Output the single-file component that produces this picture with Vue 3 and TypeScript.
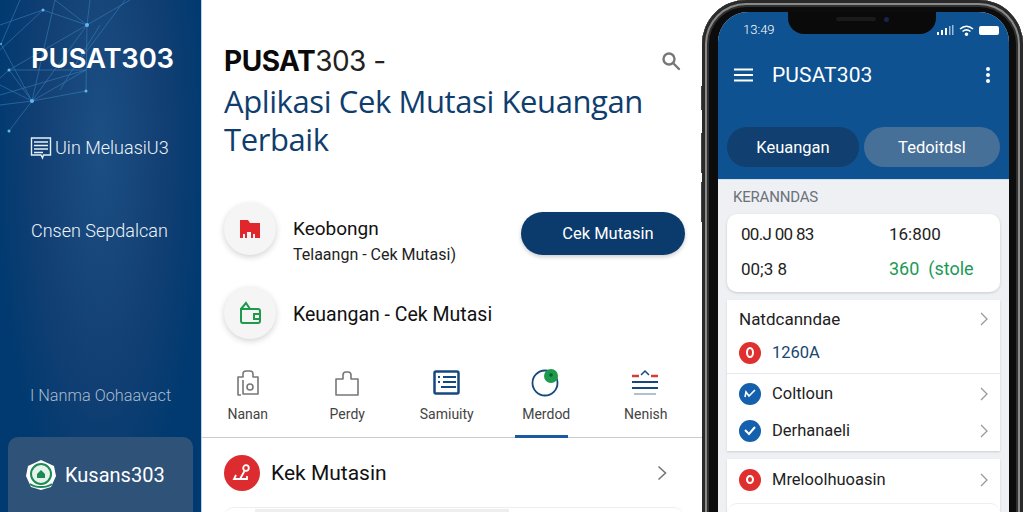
<template>
  <div class="page">
    <aside class="side">
      <svg class="net" viewBox="0 0 140 135" width="140" height="135" aria-hidden="true">
        <g stroke="#3f86c4" stroke-width="0.7" fill="none" opacity="0.75">
          <path v-for="(l, i) in netLines" :key="i" :d="l" />
        </g>
        <circle v-for="(n, i) in netNodes" :key="i" :cx="n[0]" :cy="n[1]" :r="n[2]" fill="#62b8ee" />
      </svg>
      <h1 class="brand">PUSAT303</h1>
      <div class="side-item first">
        <svg width="22" height="24" viewBox="0 0 22 24" fill="none" stroke="#e8f0f7" stroke-width="1.4">
          <path d="M1.500 2h19v17h-7l-1 3-1.500-3H1.500z" />
          <path d="M4 6h14M4 9.500h14M4 13h14M4 16.500h9" />
        </svg>
        <span>Uin MeluasiU3</span>
      </div>
      <div class="side-item second"><span>Cnsen Sepdalcan</span></div>
      <div class="side-spacer" />
      <div class="side-muted">I Nanma Oohaavact</div>
      <div class="account">
        <svg width="32" height="32" viewBox="0 0 32 32">
          <path d="M16 1l13 6 2 10-5 11-10 3-10-3-5-11 2-10z" fill="#fff" />
          <circle cx="16" cy="15" r="10" fill="#e6f3ec" stroke="#1d8a55" stroke-width="2" />
          <path d="M12 15l4-4 4 4v4h-8z" fill="#1d8a55" />
          <path d="M5 25c6 4 16 4 22 0" fill="none" stroke="#1d8a55" stroke-width="2" />
        </svg>
        <span>Kusans303</span>
      </div>
    </aside>

    <main class="main">
      <header class="head">
        <div class="title-line">
          <span><b>PUSAT</b>303 -</span>
          <svg width="20" height="20" viewBox="0 0 20 20" fill="none" stroke="#777" stroke-width="2.400">
            <circle cx="8" cy="8" r="5.500" />
            <path d="M12 12l6 6" stroke-linecap="round" />
          </svg>
        </div>
        <h2>Aplikasi Cek Mutasi Keuangan<br />Terbaik</h2>
      </header>

      <section class="rows">
        <div class="row">
          <div class="bubble">
            <svg width="22" height="20" viewBox="0 0 22 20">
              <path d="M1 1h8l2 3h10v15h-5v-4h-2v4h-2v-6H8v6H6v-4H4v4H1z" fill="#e0282c" />
            </svg>
          </div>
          <div class="row-text">
            <div class="row-title">Keobongn</div>
            <div class="row-sub">Telaangn - Cek Mutasi)</div>
          </div>
          <button type="button" class="cta">Cek Mutasin</button>
        </div>
        <div class="row">
          <div class="bubble">
            <svg width="24" height="24" viewBox="0 0 24 24" fill="none" stroke="#1d9a4c" stroke-width="2">
              <path d="M3 8h17a2 2 0 0 1 2 2v10a2 2 0 0 1-2 2H5a2 2 0 0 1-2-2z" />
              <path d="M3 8l5-6 4 6M16 13h6v5h-6z" />
            </svg>
          </div>
          <div class="row-title wide">Keuangan - Cek Mutasi</div>
        </div>
      </section>

      <nav class="tabs">
        <div v-for="t in tabs" :key="t.label" class="tab" :class="{ active: t.active }">
          <svg width="30" height="30" viewBox="0 0 30 30" fill="none" v-html="t.icon" />
          <span>{{ t.label }}</span>
        </div>
      </nav>

      <div class="link-row">
        <div class="red-dot">
          <svg width="22" height="22" viewBox="0 0 22 22" fill="none" stroke="#fff" stroke-width="1.800">
            <circle cx="15" cy="6" r="2.800" />
            <path d="M13.500 9L9 17H3l2-4M9 17h7v-3" />
          </svg>
        </div>
        <span class="link-label">Kek Mutasin</span>
        <svg class="chev" width="10" height="16" viewBox="0 0 10 16" fill="none" stroke="#777" stroke-width="1.600">
          <path d="M1.500 1.500L8.500 8l-7 6.500" />
        </svg>
      </div>
      <div class="peek" />
    </main>

    <div class="phone-wrap">
      <div class="phone">
        <i class="btn-a" /><i class="btn-b" /><i class="btn-c" />
        <div class="screen">
          <div class="notch"><i class="speaker" /><i class="camera" /></div>
          <div class="blue">
            <div class="status">
              <span>13:49</span>
              <div class="status-icons">
                <svg width="17" height="10" viewBox="0 0 17 10" fill="#fff">
                  <rect x="0" y="7" width="2" height="3" /><rect x="4" y="5" width="2" height="5" />
                  <rect x="8" y="3" width="2" height="7" /><rect x="12" y="1" width="1.500" height="9" opacity=".6" />
                  <rect x="15" y="0" width="1.500" height="10" opacity=".6" />
                </svg>
                <svg width="15" height="11" viewBox="0 0 15 11" fill="none" stroke="#fff" stroke-width="1.600">
                  <path d="M1 4c4-3.500 9-3.500 13 0M3.500 6.500c2.500-2 5.500-2 8 0" />
                  <circle cx="7.500" cy="9.200" r="1" fill="#fff" />
                </svg>
                <div class="battery" />
              </div>
            </div>
            <div class="appbar">
              <svg width="20" height="14" viewBox="0 0 20 14" stroke="#fff" stroke-width="1.800">
                <path d="M0 1.500h19M0 7h19M0 12.500h19" />
              </svg>
              <span class="app-title">PUSAT303</span>
              <svg class="dots" width="6" height="18" viewBox="0 0 6 18" fill="#fff">
                <circle cx="3" cy="3" r="2" /><circle cx="3" cy="9" r="2" /><circle cx="3" cy="15" r="2" />
              </svg>
            </div>
            <div class="pills">
              <div class="pill dark">Keuangan</div>
              <div class="pill light">Tedoitdsl</div>
            </div>
          </div>
          <div class="body">
            <div class="label">KERANNDAS</div>
            <div class="stat-card">
              <span class="tight">00.J 00 83</span><span>16:800</span>
              <span>00;3 8</span><span class="green">360&nbsp; (stole</span>
            </div>
            <div class="list">
              <div class="li">
                <span class="li-name plain">Natdcanndae</span>
                <svg class="li-chev" width="8" height="14" viewBox="0 0 8 14" fill="none" stroke="#999" stroke-width="1.300"><path d="M1 1l6 6-6 6" /></svg>
              </div>
              <div class="li amount">
                <i class="dot red"><i class="ring" /></i>
                <span class="li-name navy">1260A</span>
              </div>
              <div class="li sep">
                <i class="dot blue-dot"><svg width="12" height="10" viewBox="0 0 12 10" fill="none" stroke="#fff" stroke-width="1.600"><path d="M1 8l1-5 3 4 6-6" /></svg></i>
                <span class="li-name">Coltloun</span>
                <svg class="li-chev" width="8" height="14" viewBox="0 0 8 14" fill="none" stroke="#999" stroke-width="1.300"><path d="M1 1l6 6-6 6" /></svg>
              </div>
              <div class="li">
                <i class="dot blue-dot"><svg width="12" height="10" viewBox="0 0 12 10" fill="none" stroke="#fff" stroke-width="2"><path d="M1 4l4 4 6-7" /></svg></i>
                <span class="li-name">Derhanaeli</span>
                <svg class="li-chev" width="8" height="14" viewBox="0 0 8 14" fill="none" stroke="#999" stroke-width="1.300"><path d="M1 1l6 6-6 6" /></svg>
              </div>
            </div>
            <div class="list second-list">
              <div class="li">
                <i class="dot red"><i class="ring small" /></i>
                <span class="li-name">Mreloolhuoasin</span>
                <svg class="li-chev" width="8" height="14" viewBox="0 0 8 14" fill="none" stroke="#999" stroke-width="1.300"><path d="M1 1l6 6-6 6" /></svg>
              </div>
              <div class="li-peek" />
            </div>
          </div>
        </div>
      </div>
    </div>
  </div>
</template>

<script setup lang="ts">
const netNodes: [number, number, number][] = [
  [43, 10, 1.500], [87, 25, 2], [9, 70, 1.500], [32, 101, 2], [86, 91, 1.500], [9, 131, 1.500], [1, 44, 1],
];

const netLines: string[] = [
  'M0 25L43 10L87 25', 'M43 10L0 50', 'M55 0L87 25', 'M87 25L32 101', 'M87 25L86 91', 'M90 0L87 25',
  'M87 25L130 0', 'M100 25L60 90', 'M125 0L80 60', 'M0 78L9 70L86 70', 'M9 70L32 101', 'M32 101L86 91',
  'M0 105L32 101', 'M32 101L9 131', 'M0 85L32 101', 'M9 70L87 25', 'M1 44L32 101', 'M55 0L32 101', 'M20 0L1 44',
  'M0 95L86 70', 'M32 101L86 70',
];

interface Tab {
  label: string;
  icon: string;
  active?: boolean;
}

const tabs: Tab[] = [
  {
    label: 'Nanan',
    icon: '<g stroke="#777" stroke-width="1.600" stroke-linejoin="round"><path d="M8 27H5V9h5V6a3 3 0 0 1 3-3h4a3 3 0 0 1 3 3v3h5v17H10V12"/><circle cx="17" cy="19" r="3"/></g>',
  },
  {
    label: 'Perdy',
    icon: '<path d="M4 27V11h7V7a3 3 0 0 1 3-3h2a3 3 0 0 1 3 3v4h7v16z" stroke="#777" stroke-width="1.600" stroke-linejoin="round"/>',
  },
  {
    label: 'Samiuity',
    icon: '<rect x="2.500" y="3.500" width="24" height="22" rx="1.500" stroke="#14487f" stroke-width="2.500"/><path d="M6 9h2M11 9h13M6 14h2M11 14h13M9 19h15" stroke="#14487f" stroke-width="2"/>',
  },
  {
    label: 'Merdod',
    active: true,
    icon: '<circle cx="14" cy="15" r="12.500" stroke="#14487f" stroke-width="1.800"/><circle cx="20" cy="8" r="7" fill="#1d9a4c"/><circle cx="20" cy="7" r="1.800" fill="#0d5b2e"/>',
  },
  {
    label: 'Nenish',
    icon: '<path d="M1 8h7M20 8h7" stroke="#d83a34" stroke-width="2.500"/><path d="M10 7l4-4 4 4" stroke="#14487f" stroke-width="1.500"/><path d="M1 14h26M1 20h26" stroke="#14487f" stroke-width="2"/><path d="M3 26h22" stroke="#9ab" stroke-width="1.500"/>',
  },
];
</script>

<style>
html,
body {
  margin: 0;
  background: #fff;
}
</style>

<style scoped>
.page {
  display: flex;
  width: 1024px;
  height: 512px;
  overflow: hidden;
  background: #fff;
  font-family: Roboto, "Liberation Sans", sans-serif;
  color: #111;
}

/* left rail */
.side {
  position: relative;
  box-sizing: border-box;
  flex: 0 0 202px;
  display: flex;
  flex-direction: column;
  padding: 42px 8px 0;
  overflow: hidden;
  color: #eef4f9;
  background: radial-gradient(ellipse at 50% 28%, #1c4f84 0, #123f73 45%, rgba(0, 58, 112, 0) 75%), #003a70;
  border-right: 1px solid #b5d2ee;
}

.net {
  position: absolute;
  top: 0;
  left: 0;
}

.brand {
  position: relative;
  margin: 0 0 0 23px;
  font-family: Inter, sans-serif;
  font-size: 27.500px;
  line-height: 32px;
  font-weight: 600;
  letter-spacing: -0.2px;
  color: #fff;
}

.side-item {
  position: relative;
  display: flex;
  align-items: center;
  gap: 3px;
  margin-left: 22px;
  font-size: 18px;
  font-weight: 300;
  line-height: 24px;
}

.side-item.first {
  margin-top: 62px;
}

.side-item.second {
  margin-top: 59px;
  margin-left: 23px;
}

.side-spacer {
  flex: 1;
}

.side-muted {
  margin-left: 22px;
  margin-bottom: 29px;
  font-size: 16.300px;
  line-height: 24px;
  font-weight: 300;
  color: #a9bccf;
  white-space: nowrap;
}

.account {
  display: flex;
  align-items: center;
  gap: 8px;
  height: 75px;
  padding: 0 0 0 17px;
  border-radius: 10px 10px 0 0;
  background: #2f5279;
  font-size: 20px;
  color: #fff;
}

/* middle panel */
.main {
  box-sizing: border-box;
  flex: 0 0 500px;
  display: flex;
  flex-direction: column;
  padding-left: 22px;
  overflow: hidden;
}

.main > * {
  flex-shrink: 0;
}

.head {
  padding: 42px 21px 0 0;
}

.title-line {
  display: flex;
  align-items: center;
  justify-content: space-between;
  font-family: Inter, sans-serif;
  font-size: 28px;
  line-height: 38px;
  letter-spacing: -0.5px;
  color: #222;
}

.title-line b {
  font-weight: 700;
  color: #0a0a0a;
}

.head h2 {
  margin: 2px 0 0;
  font-family: "Open Sans", sans-serif;
  font-size: 31px;
  line-height: 38px;
  font-weight: 400;
  letter-spacing: -0.4px;
  color: #0f3d6e;
}

.rows {
  display: flex;
  flex-direction: column;
  gap: 30px;
  margin-top: 44px;
  padding-right: 17px;
}

.row {
  display: flex;
  align-items: center;
  gap: 17px;
  height: 54px;
}

.bubble {
  flex: 0 0 52px;
  height: 52px;
  display: flex;
  align-items: center;
  justify-content: center;
  border-radius: 50%;
  background: #f5f5f5;
  box-shadow: 0 2px 6px rgba(0, 0, 0, 0.18);
}

.row-text {
  flex: 1;
  padding-top: 26px;
}

.row-title {
  font-size: 19px;
  line-height: 26px;
  color: #111;
}

.row-title.wide {
  margin-top: 3px;
  font-size: 19.500px;
}

.row-sub {
  font-size: 16px;
  line-height: 26px;
  color: #222;
}

.cta {
  width: 164px;
  height: 43px;
  margin-top: 8px;
  padding: 0 0 0 10px;
  border: 0;
  border-radius: 22px;
  background: #0b3a6c;
  color: #fff;
  font-family: inherit;
  font-size: 16.500px;
  box-shadow: 0 2px 4px rgba(0, 0, 0, 0.2);
}

.tabs {
  display: flex;
  margin: 25px 0 0 -22px;
  height: 72px;
  border-bottom: 1px solid #c8cbcf;
}

.tab {
  box-sizing: border-box;
  display: flex;
  flex: 0 0 99.500px;
  flex-direction: column;
  align-items: center;
  padding-top: 3px;
  font-size: 14px;
  line-height: 18px;
  color: #444;
}

.tab:first-child {
  margin-left: -4px;
}

.tab span {
  margin-top: 7px;
}

.tab.active {
  position: relative;
}

.tab.active::after {
  content: "";
  position: absolute;
  left: 18px;
  width: 53px;
  bottom: -1px;
  height: 3px;
  background: #1b5a9e;
}

.link-row {
  display: flex;
  align-items: center;
  gap: 11px;
  height: 36px;
  margin-top: 17px;
  padding-right: 35px;
}

.red-dot {
  flex: 0 0 36px;
  height: 36px;
  display: flex;
  align-items: center;
  justify-content: center;
  border-radius: 50%;
  background: #dd2c2f;
}

.link-label {
  flex: 1;
  font-size: 21px;
  color: #111;
}

.peek {
  height: 12px;
  margin: 16px 18px 0 0;
  border-radius: 10px 10px 0 0;
  border-top: 1px solid #eee;
}

/* phone */
.phone-wrap {
  flex: 1;
  min-width: 0;
}

.phone {
  position: relative;
  box-sizing: border-box;
  width: 321px;
  height: 560px;
  padding: 12px 14px 0 16px;
  border-radius: 44px;
  background: #0c0c0c;
  box-shadow: inset 0 0 0 3px #2a2a2a, inset 0 0 0 5px #8a8a8a, inset 0 0 0 7px #303030;
}

.btn-a,
.btn-b,
.btn-c {
  position: absolute;
  left: -1px;
  width: 1px;
  background: #444;
}

.btn-a {
  top: 86px;
  height: 24px;
}

.btn-b {
  top: 133px;
  height: 40px;
}

.btn-c {
  top: 182px;
  height: 40px;
}

.screen {
  position: relative;
  height: 100%;
  overflow: hidden;
  border-radius: 30px 30px 0 0;
  background: #eef0f3;
}

.notch {
  position: absolute;
  top: 0;
  left: 70px;
  width: 148px;
  height: 22px;
  display: flex;
  align-items: center;
  justify-content: center;
  gap: 8px;
  border-radius: 0 0 16px 16px;
  background: #0a0a0a;
}

.speaker {
  width: 40px;
  height: 4px;
  margin-top: -8px;
  border-radius: 2px;
  background: #1a1a1a;
}

.camera {
  width: 5px;
  height: 5px;
  margin-top: -8px;
  border-radius: 50%;
  background: #16264a;
}

.blue {
  box-sizing: border-box;
  height: 167px;
  padding: 10px 9px 0;
  background: #0e5291;
  color: #fff;
}

.status {
  display: flex;
  align-items: center;
  justify-content: space-between;
  padding: 0 1px 0 16px;
  font-size: 13px;
  line-height: 16px;
  font-weight: 300;
}

.status-icons {
  display: flex;
  align-items: center;
  gap: 5px;
}

.battery {
  width: 20px;
  height: 9px;
  border-radius: 2px;
  background: #fff;
}

.appbar {
  display: flex;
  align-items: center;
  gap: 18px;
  margin-top: 23px;
  padding: 0 9px 0 7px;
}

.app-title {
  flex: 1;
  font-size: 21px;
  line-height: 28px;
  letter-spacing: 0.1px;
}

.pills {
  display: flex;
  gap: 5px;
  margin-top: 38px;
}

.pill {
  height: 40px;
  display: flex;
  align-items: center;
  justify-content: center;
  border-radius: 20px;
  font-size: 16.500px;
}

.pill.dark {
  flex: 0 0 132px;
  background: #103f70;
}

.pill.light {
  flex: 0 0 136px;
  background: #477099;
}

.body {
  padding: 0 9px;
  border-top: 1px solid #cfe0f0;
}

.label {
  padding: 9px 6px 0;
  font-size: 15px;
  line-height: 17px;
  color: #6a727c;
  letter-spacing: -0.2px;
}

.stat-card {
  display: grid;
  grid-template-columns: 148px 1fr;
  row-gap: 10px;
  height: 78px;
  box-sizing: border-box;
  margin-top: 8px;
  padding: 9px 14px;
  border-radius: 10px;
  background: #fff;
  box-shadow: 0 1px 3px rgba(0, 0, 0, 0.16);
  font-size: 17px;
  line-height: 22px;
  color: #222;
}

.tight {
  letter-spacing: -0.700px;
}

.green {
  font-size: 18px;
  color: #1c9a55;
}

.list {
  margin-top: 8px;
  padding-bottom: 2px;
  background: #fff;
  box-shadow: 0 1px 2px rgba(0, 0, 0, 0.14);
}

.li {
  position: relative;
  display: flex;
  align-items: center;
  gap: 11px;
  height: 37px;
  padding: 0 12px;
}

.li.amount {
  margin-top: -3px;
}

.li.sep {
  margin-top: 2px;
  padding-top: 1px;
  border-top: 1px solid #e6e8eb;
}

.li-name {
  flex: 1;
  font-size: 16.500px;
  line-height: 22px;
  color: #222;
}

.li-name.plain {
  font-size: 17px;
}

.navy {
  color: #17466f;
}

.dot {
  flex: 0 0 22px;
  height: 22px;
  display: flex;
  align-items: center;
  justify-content: center;
  border-radius: 50%;
}

.dot.red {
  background: #df2f2f;
}

.blue-dot {
  background: #1460ad;
}

.ring {
  width: 4px;
  height: 7px;
  border: 2px solid #fff;
  border-radius: 50%;
}

.ring.small {
  width: 4px;
  height: 5px;
}

.li-chev {
  flex: none;
}

.second-list {
  padding-top: 2px;
}

.li-peek {
  height: 10px;
  margin-top: 5px;
  border-top: 1px solid #eee;
  border-radius: 10px 10px 0 0;
}
</style>
